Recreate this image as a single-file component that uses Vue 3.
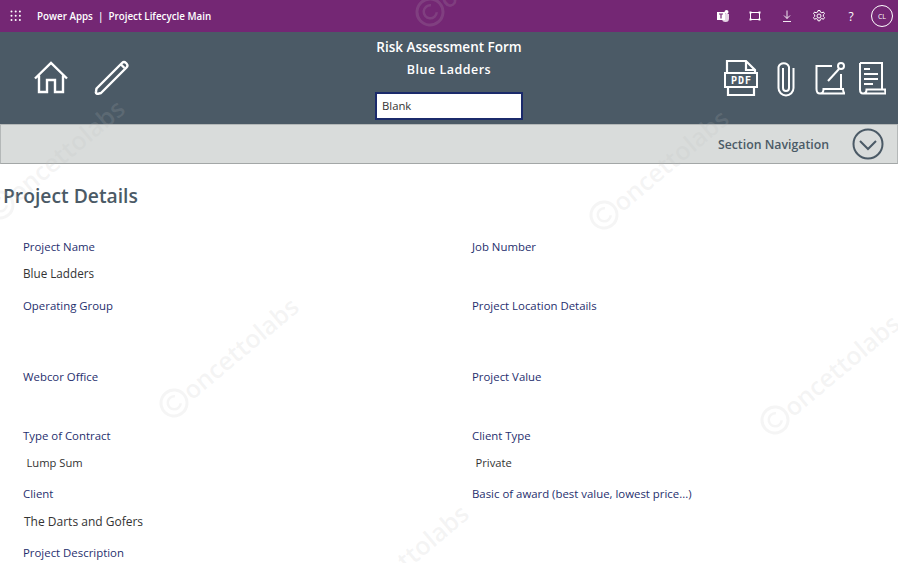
<script setup>
const fields = [
  { label: 'Project Name', value: 'Blue Ladders' },
  { label: 'Job Number', value: '' },
  { label: 'Operating Group', value: '' },
  { label: 'Project Location Details', value: '' },
  { label: 'Webcor Office', value: '' },
  { label: 'Project Value', value: '' },
  { label: 'Type of Contract', value: 'Lump Sum', kind: 'small' },
  { label: 'Client Type', value: 'Private', kind: 'small' },
  { label: 'Client', value: 'The Darts and Gofers', kind: 'large' },
  { label: 'Basic of award (best value, lowest price...)', value: '' },
  { label: 'Project Description', value: '' },
]
const marks = [
  { x: 174, y: 403 },
  { x: 604, y: 215 },
  { x: 775, y: 420 },
  { x: 0, y: 205 },
  { x: 344, y: 610 },
  { x: 430, y: 12 },
]
</script>

<template>
  <div class="page">
    <header class="topbar">
      <div class="brand">
        <svg class="waffle" width="12" height="12" viewBox="0 0 12 12" fill="#fff">
          <circle v-for="c in 9" :key="c" :cx="1.500 + ((c - 1) % 3) * 4.200" :cy="1.500 + Math.floor((c - 1) / 3) * 4.200" r="1" />
        </svg>
        <span class="crumb">Power Apps &nbsp;|&nbsp; Project Lifecycle Main</span>
      </div>
      <div class="tools">
        <svg width="14" height="14" viewBox="0 0 14 14"><circle cx="10.500" cy="3" r="2" fill="#fff"/><path d="M6 5h7v4.500a3.500 3.500 0 0 1-7 0z" fill="#e5d5e5"/><rect x="1" y="3" width="8" height="8" fill="#fff"/><path d="M3 5h4M5 5v4.500" stroke="#742774" stroke-width="1.200"/></svg>
        <svg width="14" height="14" viewBox="0 0 14 14" fill="none" stroke="#fff"><rect x="2.500" y="3.500" width="9" height="7"/><rect x="1.500" y="2.500" width="2" height="2" fill="#fff" stroke="none"/><rect x="10.500" y="2.500" width="2" height="2" fill="#fff" stroke="none"/><rect x="1.500" y="9.500" width="2" height="2" fill="#fff" stroke="none"/><rect x="10.500" y="9.500" width="2" height="2" fill="#fff" stroke="none"/></svg>
        <svg width="14" height="14" viewBox="0 0 14 14" fill="none" stroke="#fff" stroke-width="0.900"><path d="M7 1.500v8M4 6.500l3 3 3-3M3 12.500h8"/></svg>
        <svg width="14" height="14" viewBox="0 0 14 14" fill="none" stroke="#fff"><path d="M6 1.500h2l.4 1.600 1.500.7 1.500-.8 1.100 1.700-1.200 1.100v1.600l1.200 1.200-1.100 1.700-1.500-.8-1.500.7-.4 1.600H6l-.4-1.600-1.500-.7-1.500.8-1.100-1.700 1.200-1.200V5.800L1.500 4.700l1.100-1.700 1.500.8 1.500-.7z"/><circle cx="7" cy="7" r="2"/></svg>
        <span class="help">?</span>
        <span class="avatar">CL</span>
      </div>
    </header>

    <section class="banner">
      <div class="left-icons">
        <svg width="36" height="34" viewBox="0 0 36 34" fill="none" stroke="#fff" stroke-width="2.400">
          <path d="M2 17.500L18 2l16 15.500M6 14.500V31h8V19h8v12h8V14.500"/>
        </svg>
        <svg class="ic-pencil" width="36" height="36" viewBox="0 0 36 36" fill="none" stroke="#fff" stroke-width="2.400" stroke-linejoin="round">
          <path d="M2.500 29.500L28 4q2-2 4 0l.5.5q2 2 0 4L7 34l-3.500 1q-2-.5-1.500-2.500z"/><path d="M27 5.500l3.500 3.500"/>
        </svg>
      </div>
      <div class="center">
        <h1>Risk Assessment Form</h1>
        <h2>Blue Ladders</h2>
        <div class="input">Blank</div>
      </div>
      <div class="right-icons">
        <svg class="ic-pdf" width="36" height="38" viewBox="0 0 36 38" fill="none" stroke="#fff" stroke-width="2.200">
          <path d="M4 13V2h19l9 9v3M23 2v9h9M5 28v8h26v-8"/>
          <rect x="2" y="14" width="32" height="14" stroke-width="2"/>
          <text x="18.500" y="25" class="pdf" text-anchor="middle">PDF</text>
        </svg>
        <svg class="ic-clip" width="18" height="38" viewBox="0 0 18 38" fill="none" stroke="#fff" stroke-width="2">
          <path d="M6 9v20a3 3 0 0 0 6 0V8A5.500 5.500 0 0 0 1.500 8v21a7.500 7.500 0 0 0 15 0V9"/>
        </svg>
        <svg class="ic-note" width="30" height="34" viewBox="0 0 30 34" fill="none" stroke="#fff" stroke-width="2">
          <path d="M17 5H1.500v23c0 3 1.500 4.500 3.500 4.500 2.500 0 3.500-2 3.500-4.500H28c0 2 .5 3.500 1.500 4.500H5M26 13v15"/>
          <path d="M13 20L24 8"/><circle cx="26" cy="5" r="3"/>
        </svg>
        <svg class="ic-doc" width="28" height="34" viewBox="0 0 28 34" fill="none" stroke="#fff" stroke-width="2">
          <path d="M2 2h22v26.500M2 2v26.500c0 2.500 1 4 3 4 2.500 0 3.500-2 3.500-4H27c0 2 .5 3.500 1 4H5"/>
          <path d="M6 8h6M6 13h14M6 18h14M6 23h9"/>
        </svg>
      </div>
    </section>

    <nav class="section-nav">
      <span>Section Navigation</span>
      <svg width="32" height="32" viewBox="0 0 32 32" fill="none" stroke="#4b5a66" stroke-width="2">
        <circle cx="16" cy="16" r="14.500"/><path d="M8 13l8 8 8-8"/>
      </svg>
    </nav>

    <main class="content">
      <h3>Project Details</h3>
      <div class="grid">
        <div v-for="f in fields" :key="f.label" class="field">
          <div class="label">{{ f.label }}</div>
          <div v-if="f.value" class="value" :class="f.kind">{{ f.value }}</div>
        </div>
      </div>
    </main>

    <div class="marks">
      <span v-for="(m, i) in marks" :key="i" class="mark" :style="{ left: m.x + 'px', top: m.y + 'px' }">
        <svg width="30" height="30" viewBox="0 0 30 30" fill="none" stroke="currentColor" stroke-width="3">
          <circle cx="15" cy="15" r="13"/><path d="M20 10.500a6.500 6.500 0 1 0 0 9" stroke-width="2.500"/>
        </svg>
        <span>oncettolabs</span>
      </span>
    </div>
  </div>
</template>

<style scoped>
.page {
  position: relative;
  width: 898px;
  height: 563px;
  overflow: hidden;
  background: #fff;
  font-family: "Open Sans", sans-serif;
}
.topbar {
  height: 32px;
  background: #742774;
  display: flex;
  align-items: center;
  justify-content: space-between;
  color: #fff;
}
.brand {
  display: flex;
  align-items: center;
  padding-left: 10px;
}
.crumb {
  margin-left: 15px;
  font-size: 9.800px;
  font-weight: 600;
  white-space: pre;
}
.tools {
  display: flex;
  align-items: center;
  gap: 18px;
  padding-right: 5px;
}
.help {
  font-size: 12px;
  width: 14px;
  text-align: center;
}
.avatar {
  width: 20px;
  height: 20px;
  margin-left: -5px;
  border: 1px solid #fff;
  border-radius: 50%;
  font-size: 7px;
  display: flex;
  align-items: center;
  justify-content: center;
}
.banner {
  height: 92px;
  background: #4b5a66;
  display: grid;
  grid-template-columns: 1fr 148px 1fr;
  align-items: center;
}
.left-icons {
  display: flex;
  align-items: center;
  gap: 26px;
  padding-left: 33px;
}
.ic-pencil { margin-left: -1px; margin-top: -2px; }
.center {
  display: flex;
  flex-direction: column;
  align-items: center;
  color: #fff;
  align-self: start;
}
h1, h2, h3 { margin: 0; font-weight: 600; }
h1 {
  font-size: 13.500px;
  line-height: 18px;
  margin-top: 6px;
  white-space: nowrap;
}
h2 {
  font-size: 12.500px;
  line-height: 18px;
  margin-top: 5px;
  white-space: nowrap;
  letter-spacing: 0.5px;
}
.input {
  box-sizing: border-box;
  width: 148px;
  height: 28px;
  margin-top: 13px;
  padding-left: 5px;
  background: #fff;
  border: 2px solid #1b2a6b;
  color: #333;
  font-size: 11.300px;
  line-height: 24px;
}
.right-icons {
  display: flex;
  align-items: center;
  justify-content: flex-end;
  padding-right: 12px;
}
.ic-clip { margin-left: 18px; }
.ic-note { margin-left: 20px; }
.ic-doc { margin-left: 13px; }
.pdf {
  fill: #fff;
  stroke: none;
  font-family: "DejaVu Sans Mono", monospace;
  font-size: 10px;
  font-weight: 700;
  letter-spacing: 1px;
}
.section-nav {
  box-sizing: border-box;
  height: 40px;
  background: #d9dcdb;
  border: 1px solid #b4b8b8;
  border-bottom-color: #a3a7a7;
  display: flex;
  align-items: center;
  justify-content: flex-end;
  gap: 23px;
  padding-right: 13px;
  color: #4b5a66;
  font-size: 12.300px;
  font-weight: 600;
}
.content h3 {
  font-size: 19.300px;
  line-height: 28px;
  color: #4b5a66;
  margin-top: 18px;
  margin-left: 3px;
}
.grid {
  display: grid;
  grid-template-columns: 449px 1fr;
  grid-template-rows: 59px 71px 59px 58px 59px 30px;
  margin-top: 28px;
  padding-left: 23px;
}
.label {
  font-size: 11.400px;
  line-height: 18px;
  color: #1f2f6e;
}
.value {
  font-size: 11.700px;
  line-height: 18px;
  color: #333;
  margin-top: 8px;
}
.value.small {
  font-size: 11.200px;
  padding-top: 1px;
  padding-left: 3.500px;
}
.value.large {
  font-size: 12px;
  padding-top: 2px;
  padding-left: 1px;
}
.marks {
  position: absolute;
  inset: 0;
  pointer-events: none;
}
.mark {
  position: absolute;
  display: flex;
  align-items: center;
  margin: -15px 0 0 -15px;
  font-size: 25px;
  line-height: 30px;
  font-weight: 600;
  color: rgba(190, 190, 190, 0.16);
  transform-origin: 15px 15px;
  transform: rotate(-40deg);
  white-space: nowrap;
}
</style>
